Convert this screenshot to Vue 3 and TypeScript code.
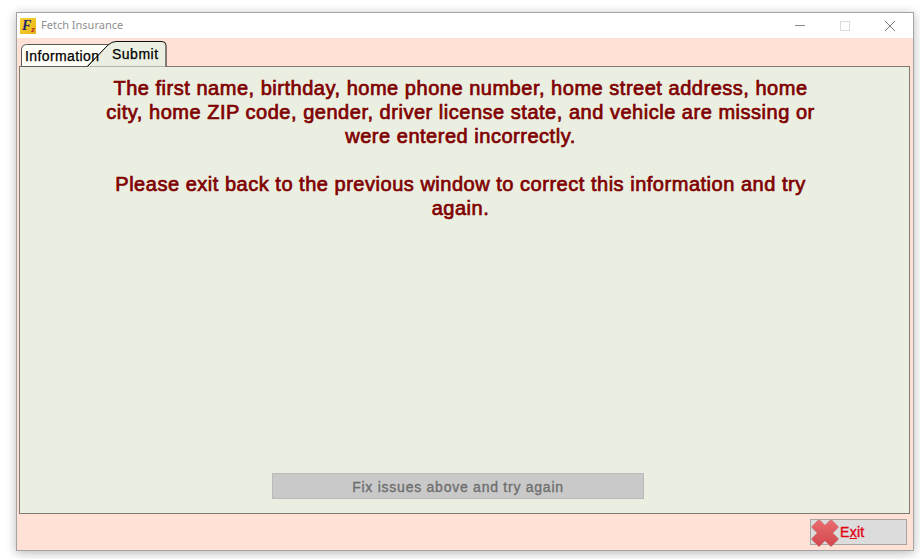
<script setup lang="ts">
const lines: string[] = [
  'The first name, birthday, home phone number, home street address, home',
  'city, home ZIP code, gender, driver license state, and vehicle are missing or',
  'were entered incorrectly.',
]
const lines2: string[] = [
  'Please exit back to the previous window to correct this information and try',
  'again.',
]
</script>

<template>
  <div class="page">
    <div class="window">
      <header class="titlebar">
        <div class="logo"><span class="logo-f">F</span><span class="logo-z">z</span></div>
        <span class="title">Fetch Insurance</span>
        <div class="controls">
          <svg width="14" height="14" viewBox="0 0 14 14" class="ctl"><path d="M2 6.500h10" stroke="#8a8a8a" stroke-width="1" fill="none" /></svg>
          <svg width="14" height="14" viewBox="0 0 14 14" class="ctl"><rect x="2.500" y="2.500" width="9" height="9" fill="none" stroke="#dcdcdc" /></svg>
          <svg width="14" height="14" viewBox="0 0 14 14" class="ctl"><path d="M2 2l10 10M12 2L2 12" stroke="#7a7a7a" stroke-width="1" fill="none" /></svg>
        </div>
      </header>

      <div class="tabs">
        <svg class="tab-art" width="170" height="29" viewBox="0 0 170 29">
          <path d="M4.500 28.500V12q0-5 5-5.500h82L70 28.500z" fill="#fffdf8" stroke="#5a5a5a" />
          <path d="M70.500 28.500L91 7q4-3.500 8-3.500h46q4 0 4 4V28.500z" fill="#ebefe1" />
          <path d="M70.500 28.500L91 7q4-3.500 8-3.500h46q4 0 4 4V28.500" fill="none" stroke="#111" />
        </svg>
        <span class="tab tab-info">Information</span>
        <span class="tab tab-submit">Submit</span>
      </div>

      <main class="panel">
        <div class="message">
          <div v-for="l in lines" :key="l">{{ l }}</div>
          <div class="gap"></div>
          <div v-for="l in lines2" :key="l">{{ l }}</div>
        </div>
        <button class="fix" disabled>Fix issues above and try again</button>
      </main>

      <footer class="footer">
        <button class="exit">
          <svg class="exit-icon" width="28" height="28" viewBox="0 0 28 28">
            <defs>
              <linearGradient id="exitRed" x1="0" y1="0" x2="0" y2="1">
                <stop offset="0" stop-color="#e96d70" />
                <stop offset="1" stop-color="#d2474d" />
              </linearGradient>
            </defs>
            <path d="M9 1L14 6L19 1Q20 0 21 1L27 7Q28 8 27 9L22 14L27 19Q28 20 27 21L21 27Q20 28 19 27L14 22L9 27Q8 28 7 27L1 21Q0 20 1 19L6 14L1 9Q0 8 1 7L7 1Q8 0 9 1Z" fill="url(#exitRed)" stroke="#b9a9a5" stroke-width="0.6" />
          </svg>
          <span class="exit-label">E<u>x</u>it</span>
        </button>
      </footer>
    </div>
  </div>
</template>

<style>
html, body { margin: 0; background: #fff; }
</style>

<style scoped>
.page {
  width: 920px;
  height: 559px;
  padding: 12px 0 0 16px;
  box-sizing: border-box;
  overflow: hidden;
  font-family: "Liberation Sans", Arial, sans-serif;
}
.window {
  width: 898px;
  height: 539px;
  box-sizing: border-box;
  border: 1px solid #a3a3a3;
  background: #ffe2d5;
  box-shadow: 0 2px 10px rgba(0, 0, 0, 0.28);
  display: flex;
  flex-direction: column;
}
.titlebar {
  height: 25px;
  flex: none;
  background: #fff;
  display: flex;
  align-items: center;
  padding-left: 3px;
}
.logo {
  width: 16px;
  height: 16px;
  background: linear-gradient(135deg, #f6d33a, #e8b512);
  display: flex;
  overflow: hidden;
  margin-right: 5px;
  padding-left: 2px;
  box-sizing: border-box;
}
.logo-f {
  font: italic bold 14px/15px "Liberation Serif", serif;
  color: #232a6e;
}
.logo-z {
  font: italic bold 9px/10px "Liberation Serif", serif;
  color: #b4232a;
  margin-top: 6px;
}
.title {
  font-size: 11px;
  line-height: 14px;
  margin-top: -2px;
  color: #8f8f8f;
  font-family: "Noto Sans", sans-serif;
}
.controls {
  margin-left: auto;
  display: flex;
  gap: 31px;
  padding-right: 16px;
}
.ctl { display: block; }
.tabs {
  height: 28px;
  flex: none;
  position: relative;
}
.tab-art {
  position: absolute;
  left: 0;
  top: 0;
  display: block;
}
.tab {
  position: absolute;
  font-size: 14px;
  line-height: 16px;
  color: #000;
  -webkit-text-stroke: 0.25px #000;
  white-space: nowrap;
}
.tab-info {
  left: 8px;
  top: 10px;
  width: 76px;
  overflow: hidden;
  letter-spacing: 0.4px;
}
.tab-submit {
  left: 95px;
  top: 8px;
  letter-spacing: 0.5px;
}
.panel {
  margin-left: 2px;
  width: 891px;
  height: 448px;
  flex: none;
  box-sizing: border-box;
  border: 1px solid #7f7a72;
  background: #ebefe1;
  display: flex;
  flex-direction: column;
  align-items: center;
}
.message {
  margin-top: 9px;
  margin-right: 8px;
  width: 760px;
  font-size: 20px;
  line-height: 24px;
  font-weight: 400;
  letter-spacing: 0.52px;
  -webkit-text-stroke: 0.7px #7f0000;
  color: #7f0000;
  text-align: center;
  white-space: nowrap;
}
.gap { height: 24px; }
.fix {
  margin-top: auto;
  margin-bottom: 14px;
  margin-right: 13px;
  width: 372px;
  height: 26px;
  box-sizing: border-box;
  border: 1px solid #b9b9b9;
  background: #c9c9c9;
  color: #6f6f6f;
  font: 400 14px "Liberation Sans", Arial, sans-serif;
  -webkit-text-stroke: 0.35px #6f6f6f;
  letter-spacing: 0.75px;
  padding: 1px 0 0;
}
.footer {
  flex: 1;
  display: flex;
  justify-content: flex-end;
  align-items: flex-start;
  padding: 5px 6px 0 0;
}
.exit {
  width: 97px;
  height: 26px;
  box-sizing: border-box;
  border: 1px solid #a8a49f;
  background: #dcdcdc;
  display: flex;
  align-items: center;
  padding: 0 0 0 29px;
  position: relative;
  font: 400 14px "Liberation Sans", Arial, sans-serif;
  letter-spacing: 0.3px;
  -webkit-text-stroke: 0.35px #e00012;
  color: #e00012;
}
.exit-icon {
  position: absolute;
  left: 0;
  top: -1px;
}
.exit-label { display: block; }
</style>
